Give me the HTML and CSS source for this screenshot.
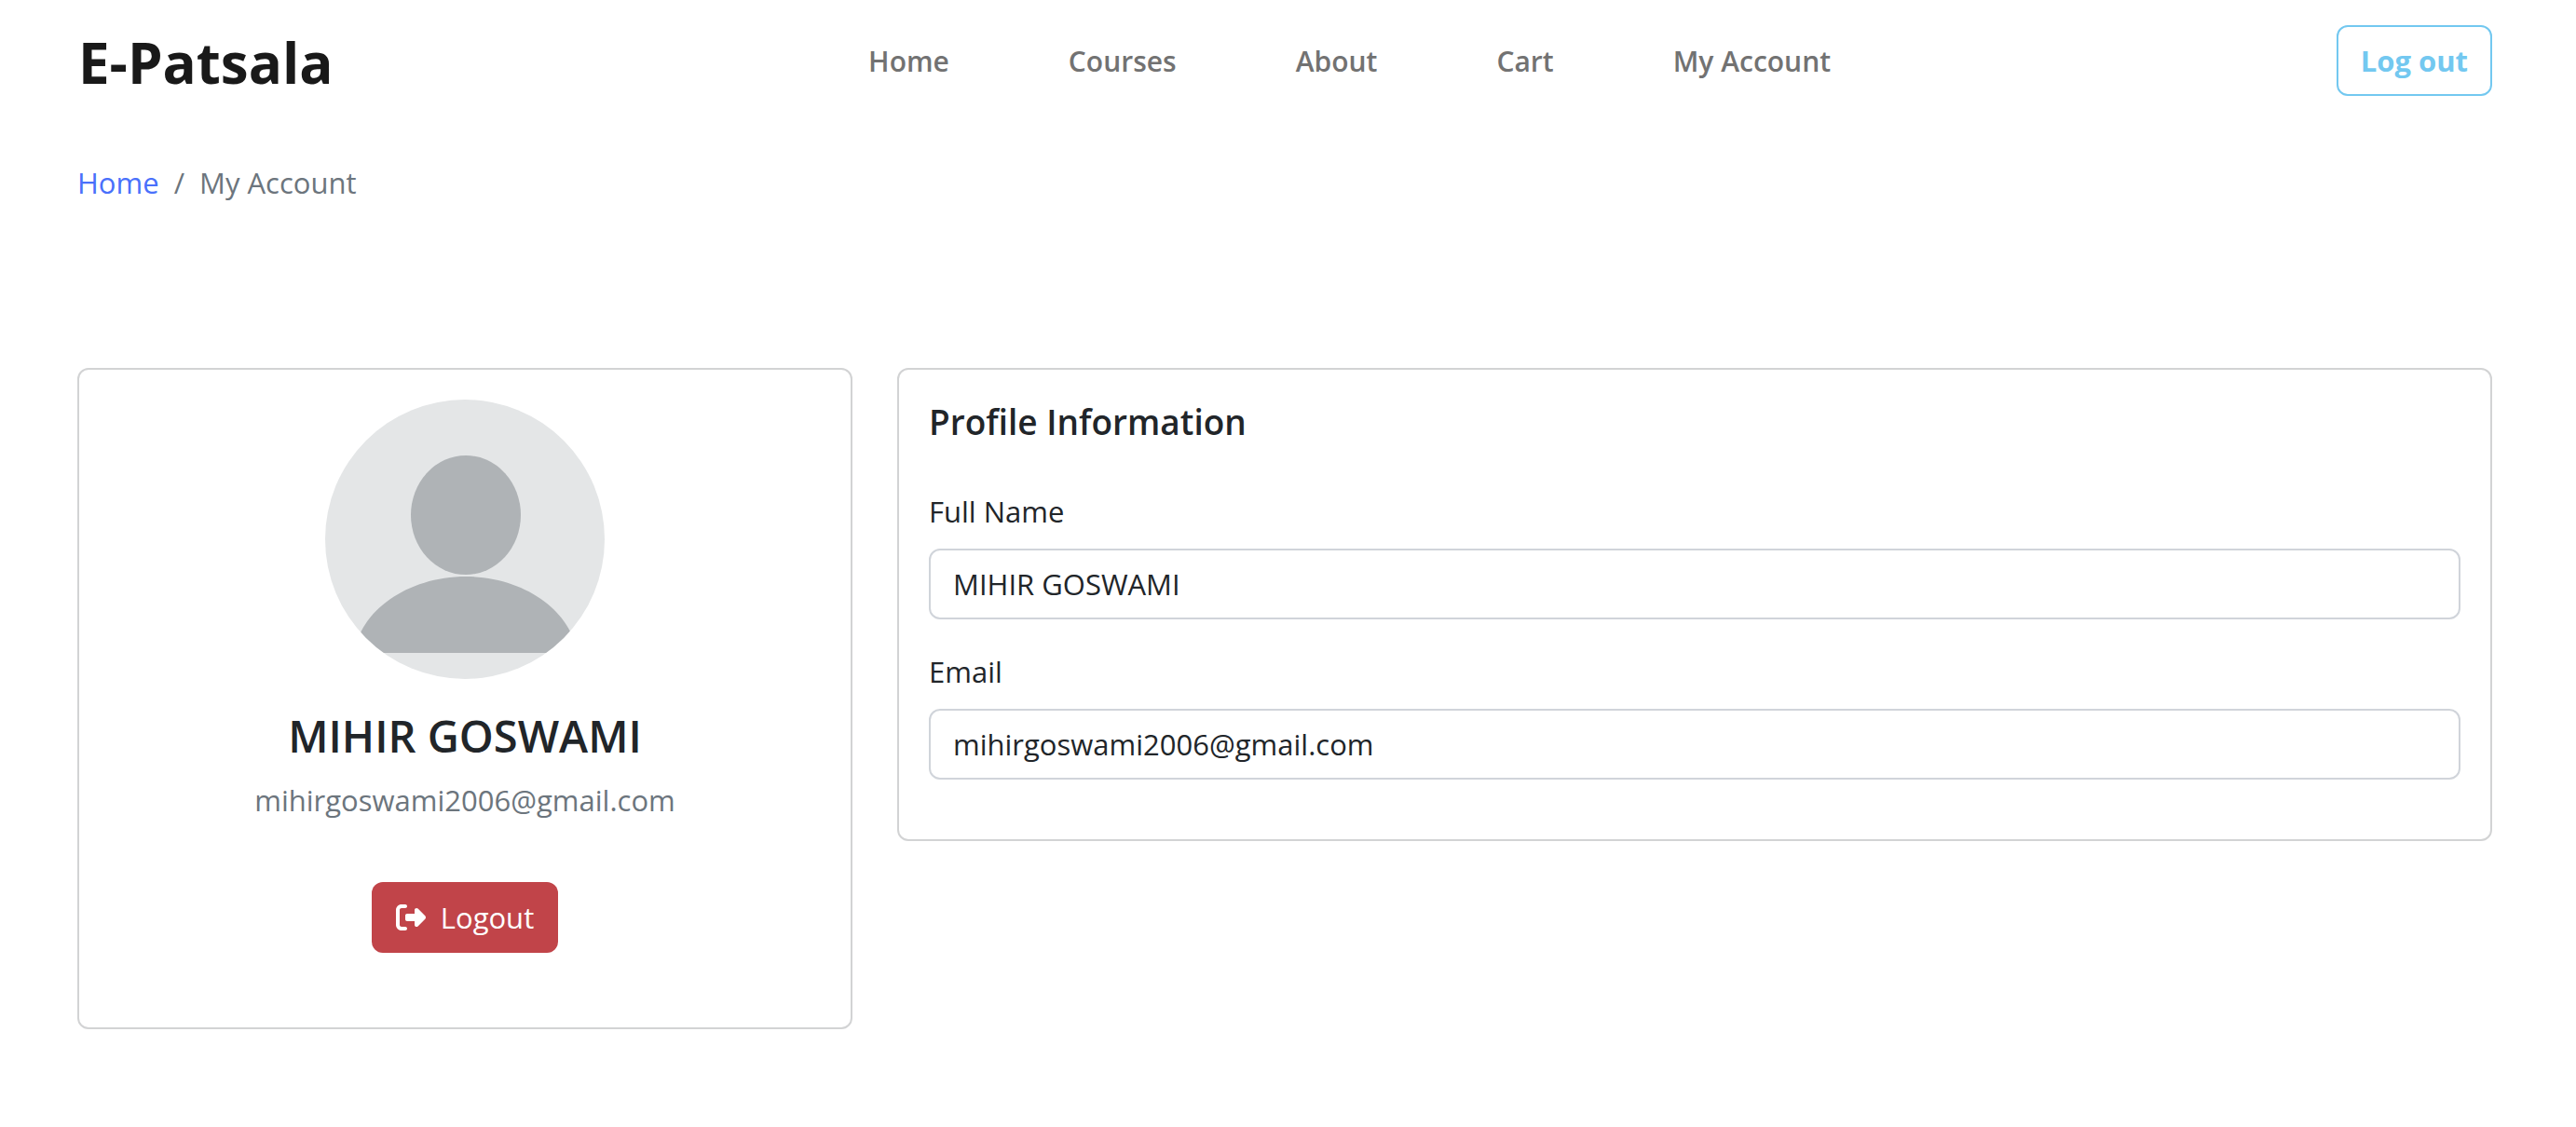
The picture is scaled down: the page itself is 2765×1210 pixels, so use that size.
FILE: index.html
```html
<!DOCTYPE html>
<html lang="en">
<head>
<meta charset="utf-8">
<meta name="viewport" content="width=device-width, initial-scale=1">
<title>My Account | E-Patsala</title>
<link rel="stylesheet" href="styles.css">
</head>
<body>
<header class="navbar">
  <a class="brand" href="#">E-Patsala</a>
  <nav class="nav">
    <a class="nav-link" href="#">Home</a>
    <a class="nav-link" href="#">Courses</a>
    <a class="nav-link" href="#">About</a>
    <a class="nav-link" href="#">Cart</a>
    <a class="nav-link" href="#">My Account</a>
  </nav>
  <button class="btn btn-outline" type="button">Log out</button>
</header>
<main class="page">
  <nav class="breadcrumb" aria-label="breadcrumb">
    <a class="breadcrumb-link" href="#">Home</a>
    <span>/</span>
    <span>My Account</span>
  </nav>
  <div class="account">
    <section class="card profile">
      <svg class="avatar" viewBox="0 0 300 300" role="img" aria-label="Profile picture">
        <clipPath id="round"><circle cx="150" cy="150" r="150"/></clipPath>
        <g clip-path="url(#round)">
          <rect width="300" height="300" fill="#e4e6e7"/>
          <ellipse cx="151" cy="124" rx="59" ry="64" fill="#afb3b6"/>
          <path d="M32 272C36 228 88 190 151 190S265 228 270 272Z" fill="#afb3b6"/>
        </g>
      </svg>
      <h1 class="profile-name">MIHIR GOSWAMI</h1>
      <p class="profile-email">mihirgoswami2006@gmail.com</p>
      <button class="btn btn-danger" type="button">
        <svg class="icon" viewBox="0 0 512 512" aria-hidden="true"><path fill="currentColor" d="M377.9 105.9L500.7 228.7c7.2 7.2 11.3 17.1 11.3 27.3s-4.1 20.1-11.3 27.3L377.9 406.1c-6.4 6.4-15 9.9-24 9.9c-18.7 0-33.9-15.2-33.9-33.9l0-62.1-128 0c-17.7 0-32-14.3-32-32l0-64c0-17.7 14.3-32 32-32l128 0 0-62.1c0-18.7 15.2-33.9 33.9-33.9c9 0 17.6 3.6 24 9.9zM160 96L96 96c-17.7 0-32 14.3-32 32l0 256c0 17.7 14.3 32 32 32l64 0c17.7 0 32 14.3 32 32s-14.3 32-32 32l-64 0c-53 0-96-43-96-96L0 128C0 75 43 32 96 32l64 0c17.7 0 32 14.3 32 32s-14.3 32-32 32z"/></svg>
        Logout
      </button>
    </section>
    <section class="card">
      <h2 class="card-title">Profile Information</h2>
      <div class="field">
        <label class="label" for="name">Full Name</label>
        <input class="input" id="name" type="text" value="MIHIR GOSWAMI">
      </div>
      <div class="field">
        <label class="label" for="email">Email</label>
        <input class="input" id="email" type="email" value="mihirgoswami2006@gmail.com">
      </div>
    </section>
  </div>
</main>
</body>
</html>
```
FILE: styles.css
```css
* { box-sizing: border-box; }
body {
  margin: 0;
  background: #fff;
  color: #212529;
  font-family: "Open Sans", "Segoe UI", sans-serif;
  font-size: 31px;
  line-height: 48px;
}
h1, h2, p { margin: 0; }
a { text-decoration: none; }

.navbar {
  display: flex;
  align-items: center;
  justify-content: space-between;
  padding: 17px 90px 17px 84px;
}
.brand {
  margin-right: 32px;
  padding-top: 4px;
  color: #191919;
  font-size: 60px;
  font-weight: 700;
  line-height: 92px;
}
.nav { display: flex; gap: 128px; padding-top: 2px; }
.nav-link { color: #727272; font-size: 30px; font-weight: 600; }

.btn {
  display: inline-flex;
  align-items: center;
  gap: 16px;
  padding: 12px 24px;
  border: 2px solid transparent;
  border-radius: 12px;
  font: inherit;
}
.btn-outline { border-color: #73c8f0; background: transparent; color: #73c8f0; font-weight: 700; }
.btn-danger { background: #c14449; color: #fff; }
.icon { width: 32px; height: 32px; }

.page { padding: 42px 90px 64px 83px; }
.breadcrumb { display: flex; gap: 16px; color: #6c757d; }
.breadcrumb-link { color: #4970fb; }

.account {
  display: grid;
  grid-template-columns: repeat(12, 1fr);
  gap: 48px;
  align-items: start;
  margin-top: 175px;
}
.card {
  grid-column: span 8;
  padding: 32px;
  border: 2px solid #d2d3d4;
  border-radius: 12px;
  background: #fff;
}
.profile {
  grid-column: span 4;
  display: flex;
  flex-direction: column;
  align-items: center;
  padding-bottom: 80px;
}
.avatar { width: 300px; height: 300px; }
.profile-name { margin: 32px 0 16px; font-size: 47px; font-weight: 600; line-height: 58px; }
.profile-email { margin-bottom: 64px; color: #6c757d; }

.card-title { margin-bottom: 48px; font-size: 37px; font-weight: 600; line-height: 48px; }
.field { margin-bottom: 32px; }
.label { display: block; margin-bottom: 16px; }
.input {
  display: block;
  width: 100%;
  padding: 12px 24px;
  border: 2px solid #d0d4da;
  border-radius: 12px;
  background: #fff;
  color: inherit;
  font: inherit;
}
```
